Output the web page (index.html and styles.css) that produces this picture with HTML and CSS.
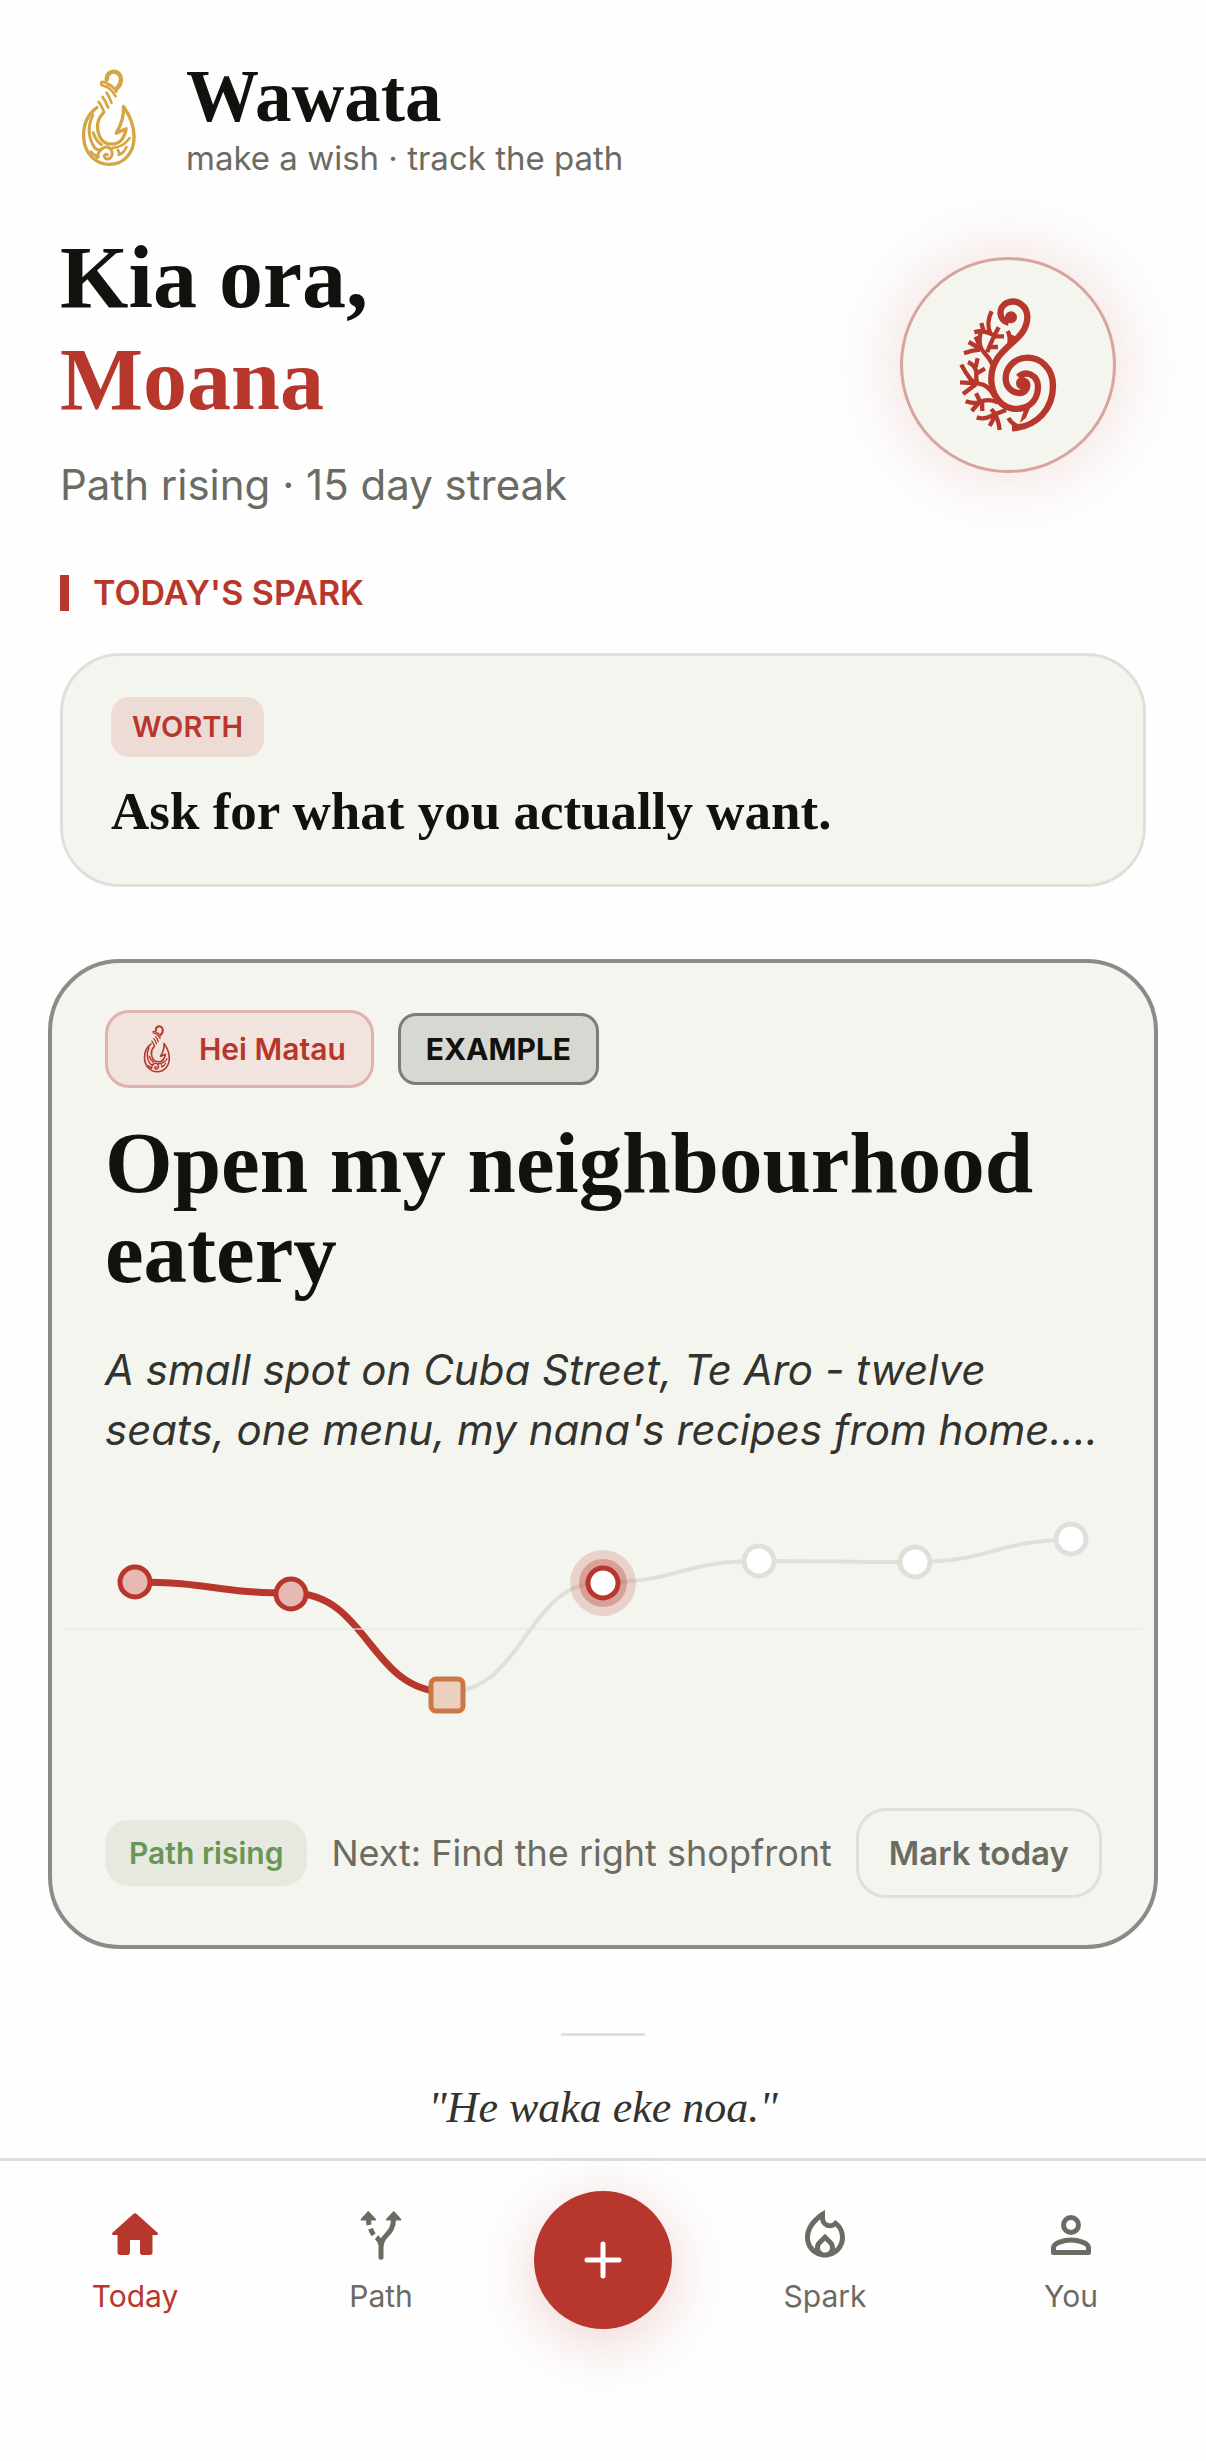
FILE: index.html
```html
<!DOCTYPE html>
<html lang="en">
<head>
    <meta charset="UTF-8">
    <meta name="viewport" content="width=device-width, initial-scale=1.0">
    <title>Wawata</title>
    <link rel="stylesheet" href="styles.css">
</head>
<body>
    <!-- Hook mark, used in the header and on the wish chip -->
    <svg class="sprite" aria-hidden="true">
        <symbol id="hook" viewBox="-33 30 295 295">
            <g fill="none" stroke="currentColor" stroke-width="10" stroke-linecap="round" stroke-linejoin="round">
                <path d="M78 146C50 166 37 200 38 235C41 288 78 317 115 317C162 317 191 280 190 232C189 195 176 168 158 143C160 172 151 198 136 223L166 210C161 238 148 256 124 256C96 257 82 236 80 205C79 186 86 174 97 163"/>
                <path d="M83 129Q91 138 100 160M95 114Q104 126 112 146M107 101Q116 112 122 132" stroke-width="8"/>
                <path d="M92 70Q88 80 100 81Q121 86 134 112" stroke-width="8"/>
                <path d="M92 70Q100 66 108 74Q126 80 137 98" stroke-width="8"/>
                <path d="M108 62C106 43 124 34 137 40C154 48 155 71 139 88" stroke-width="13"/>
                <path d="M66 168C50 202 52 238 72 268Q80 277 94 270M67 222Q76 248 92 258" stroke-width="9"/>
                <path d="M78 298C84 268 108 256 121 273C130 290 116 306 104 299C96 292 104 284 110 288" stroke-width="9"/>
                <path d="M60 279Q72 293 84 294M124 268Q158 266 176 238M141 274Q146 279 144 289Q160 282 167 265" stroke-width="8"/>
            </g>
        </symbol>
    </svg>

    <main class="page">
        <header class="brand">
            <svg class="brand-mark" aria-hidden="true"><use href="#hook"/></svg>
            <div>
                <div class="brand-name">Wawata</div>
                <div class="brand-tagline">make a wish · track the path</div>
            </div>
        </header>

        <section class="hero">
            <div>
                <h1 class="greeting">Kia ora,<br><span class="greeting-name">Moana</span></h1>
                <p class="streak">Path rising · 15 day streak</p>
            </div>
            <div class="avatar">
                <svg class="avatar-icon" viewBox="288 252 312 420" fill="none" stroke="#b8372c" stroke-width="19" stroke-linejoin="round" aria-hidden="true">
                    <!-- stem and koru spirals -->
                    <path d="M446 336C416 330 413 288 440 276C470 262 503 284 502 320C500 378 442 396 411 444C385 486 388 544 424 577C462 610 533 594 534 528C534 493 498 475 475 498"/>
                    <path d="M456 652C534 648 579 590 579 524C579 470 540 440 502 440C462 440 437 472 437 502C437 530 458 547 481 546C500 544 508 522 496 510"/>
                    <circle cx="453" cy="319" r="18" fill="#b8372c" stroke="none"/>
                    <circle cx="487" cy="517" r="19" fill="#b8372c" stroke="none"/>
                    <path d="M448 660L497 622L510 592L494 590L480 634Z" fill="#b8372c" stroke="none"/>
                    <!-- fronds -->
                    <g stroke-width="13">
                        <path d="M395 301C383 324 382 346 391 368M343 364Q366 356 391 368L408 376L432 376M364 336L371 361M416 349L402 376C394 394 386 408 382 424M385 408L414 408"/>
                        <path d="M443 360Q452 376 448 400M461 374L448 394"/>
                        <path d="M362 364C355 390 359 412 374 427Q388 440 399 464M326 393L358 411M312 427Q334 418 360 416M347 377L358 402"/>
                        <path d="M324 453Q344 462 349 482Q347 500 352 519M353 442L347 468M375 473L350 487"/>
                        <path d="M304 461Q314 482 332 505Q348 518 370 521Q390 530 404 558M300 514L350 517M309 549L348 520"/>
                        <path d="M317 571Q337 579 358 574Q386 560 414 575M348 547L361 573M335 600L356 576M366 572L367 600"/>
                        <path d="M350 619Q374 627 397 613L438 597M394 594L408 612M389 645Q399 628 406 610M404 608Q416 628 419 657M445 621Q456 641 482 650"/>
                    </g>
                </svg>
            </div>
        </section>

        <h2 class="section-label">TODAY'S SPARK</h2>
        <section class="spark-card">
            <span class="tag">WORTH</span>
            <p class="spark-text">Ask for what you actually want.</p>
        </section>

        <article class="wish-card">
            <div class="chips">
                <span class="chip chip-type"><svg class="chip-icon" aria-hidden="true"><use href="#hook"/></svg>Hei Matau</span>
                <span class="chip chip-example">EXAMPLE</span>
            </div>
            <h2 class="wish-title">Open my neighbourhood eatery</h2>
            <p class="wish-note">A small spot on Cuba Street, Te Aro - twelve seats, one menu, my nana's recipes from home....</p>

            <svg class="chart" viewBox="0 0 1080 270" fill="none" role="img" aria-label="Wish path">
                <path d="M384 190C462 190 462 80 540 80C618 80 618 59 696 59C774 59 774 60 852 60C930 60 930 38 1008 38" stroke="#dfe0da" stroke-width="4"/>
                <path d="M72 80C150 80 150 91 228 91C306 91 306 190 384 190" stroke="#b8372c" stroke-width="7"/>
                <path d="M1 127H1079" stroke="#e6e7e1" stroke-width="2" opacity=".6"/>
                <circle cx="540" cy="81" r="33" fill="#b8372c" opacity=".18"/>
                <circle cx="540" cy="81" r="24" fill="#b8372c" opacity=".32"/>
                <g stroke="#b8372c" stroke-width="5">
                    <circle cx="72" cy="80" r="15" fill="#e8b9b4"/>
                    <circle cx="228" cy="92" r="15" fill="#e8b9b4"/>
                    <circle cx="540" cy="81" r="15" fill="#fff"/>
                </g>
                <rect x="368" y="177" width="32" height="32" rx="5" fill="#eccfbf" stroke="#cc7844" stroke-width="5"/>
                <g fill="#fff" stroke="#dfe0da" stroke-width="5">
                    <circle cx="696" cy="59" r="15"/>
                    <circle cx="852" cy="60" r="15"/>
                    <circle cx="1008" cy="37" r="15"/>
                </g>
            </svg>

            <footer class="wish-footer">
                <span class="status">Path rising</span>
                <span class="next">Next: Find the right shopfront</span>
                <button class="mark-button" type="button">Mark today</button>
            </footer>
        </article>

        <div class="divider"></div>
        <p class="quote">"He waka eke noa."</p>
    </main>

    <nav class="tabbar">
        <a class="tab active" href="#today">
            <svg class="tab-icon" viewBox="0 0 24 24" fill="currentColor" aria-hidden="true"><path d="M10 19v-5h4v5c0 .55.45 1 1 1h3c.55 0 1-.45 1-1v-7h1.7c.46 0 .68-.57.33-.87L12.67 3.6c-.38-.34-.96-.34-1.34 0l-8.36 7.53c-.34.3-.13.87.33.87H5v7c0 .55.45 1 1 1h3c.55 0 1-.45 1-1z"/></svg>
            Today
        </a>
        <a class="tab" href="#path">
            <svg class="tab-icon" viewBox="0 0 24 24" fill="none" stroke="currentColor" stroke-width="2" aria-hidden="true">
                <path d="M6.9 2.8L4.2 5.8H9.7ZM17.1 2.8L14.3 5.8H19.8Z" fill="currentColor" stroke-width=".7" stroke-linejoin="round"/>
                <path d="M7 5.5Q7 6.7 7.2 8M7.8 9.5Q8.3 10.9 9.1 11.9M10.2 12.9Q11.8 14.2 12 16"/>
                <path d="M17 5.5C17 12.2 12 11.6 12 17V20.9" stroke-linecap="round"/>
            </svg>
            Path
        </a>
        <div class="tab-add">
            <button class="add-button" type="button" aria-label="Add a wish">
                <svg class="add-icon" viewBox="0 0 38 38" stroke="#fff" stroke-width="5" stroke-linecap="round" aria-hidden="true"><path d="M19 3V35M3 19H35"/></svg>
            </button>
        </div>
        <a class="tab" href="#spark">
            <svg class="tab-icon" viewBox="0 0 24 24" fill="currentColor" aria-hidden="true"><path d="M16 6l-.44.55c-.42.52-.98.75-1.54.75C13 7.3 12 6.52 12 5.3V2S4 6 4 13c0 4.42 3.58 8 8 8s8-3.58 8-8c0-2.96-1.61-5.62-4-7zm-4 13c-1.1 0-2-.87-2-1.94 0-.51.2-.99.58-1.36L12 14.3l1.43 1.4c.37.37.57.85.57 1.36 0 1.07-.9 1.94-2 1.94zm3.96-1.5c.04-.36.22-1.89-1.13-3.22L12 11.5l-2.83 2.78C7.81 15.62 8 17.16 8.04 17.5A5.98 5.98 0 0 1 6 13c0-3.16 2.13-5.65 4.03-7.25a3.993 3.993 0 0 0 3.99 3.55c.78 0 1.54-.23 2.18-.66A5.9 5.9 0 0 1 18 13c0 1.79-.79 3.4-2.04 4.5z"/></svg>
            Spark
        </a>
        <a class="tab" href="#you">
            <svg class="tab-icon" viewBox="0 0 24 24" fill="none" stroke="currentColor" stroke-width="2" stroke-linejoin="round" aria-hidden="true">
                <circle cx="12" cy="8" r="3"/>
                <path d="M5 17C5 15.2 9.2 14 12 14S19 15.2 19 17V19H5Z"/>
            </svg>
            You
        </a>
    </nav>
</body>
</html>
```
FILE: styles.css
```css
:root {
    --red: #b8372c;
    --ink: #11120e;
    --muted: #6b6b62;
    --surface: #f5f5ef;
    --line: #dfe0da;
    --serif: "Liberation Serif", serif;
    --sans: Inter, sans-serif;
}

* {
    box-sizing: border-box;
}

body {
    margin: 0;
    min-height: 100vh;
    display: flex;
    flex-direction: column;
    background: #fefefe;
    color: var(--ink);
    font-family: var(--sans);
}

h1, h2, p {
    margin: 0;
}

.sprite {
    display: none;
}

.page {
    flex: 1;
    padding: 57px 60px 18px;
}

/* Header */
.brand {
    display: flex;
    align-items: center;
    gap: 30px;
}

.brand-mark {
    width: 98px;
    height: 98px;
    margin-right: -2px;
    color: #d4a542;
}

.brand-name {
    font: bold 73px/80px var(--serif);
}

.brand-tagline {
    font-size: 33px;
    line-height: 42px;
    color: var(--muted);
}

.hero {
    display: flex;
    align-items: flex-start;
    justify-content: space-between;
    margin-top: 48px;
}

.greeting {
    font: bold 88px/102px var(--serif);
}

.greeting-name {
    color: var(--red);
}

.streak {
    margin-top: 24px;
    font-size: 42px;
    line-height: 60px;
    color: var(--muted);
}

.avatar {
    display: flex;
    align-items: center;
    justify-content: center;
    width: 216px;
    height: 216px;
    margin: 30px 30px 0 0;
    border: 3px solid #d9a49e;
    border-radius: 50%;
    background: var(--surface);
    box-shadow: 0 0 72px rgba(184, 55, 44, 0.18);
}

.avatar-icon {
    width: 104px;
    height: 140px;
}

/* Today's spark */
.section-label {
    display: flex;
    align-items: center;
    gap: 24px;
    margin-top: 57px;
    font-size: 34px;
    font-weight: 600;
    line-height: 42px;
    color: var(--red);
}

.section-label::before {
    content: '';
    width: 9px;
    height: 36px;
    background: var(--red);
}

.spark-card {
    margin-top: 39px;
    padding: 41px 48px;
    border: 3px solid var(--line);
    border-radius: 60px;
    background: var(--surface);
}

.tag {
    display: block;
    width: fit-content;
    padding: 12px 21px;
    border-radius: 18px;
    background: #eddcd6;
    color: var(--red);
    font-size: 29px;
    font-weight: 600;
    line-height: 36px;
}

.spark-text {
    margin-top: 22px;
    font: bold 53px/64px var(--serif);
}

/* Wish card */
.wish-card {
    margin: 72px -12px 0;
    padding: 47px 53px;
    border: 4px solid #8b8c87;
    border-radius: 72px;
    background: var(--surface);
}

.chips {
    display: flex;
    align-items: center;
    gap: 24px;
}

.chip {
    display: flex;
    align-items: center;
    border: 3px solid;
    font-size: 30px;
    line-height: 36px;
}

.chip-type {
    gap: 18px;
    padding: 12px 25px;
    border-color: #e2b1ac;
    border-radius: 24px;
    background: #f1e3de;
    color: var(--red);
    font-weight: 600;
}

.chip-icon {
    width: 48px;
    height: 48px;
}

.chip-example {
    padding: 15px 25px;
    border-color: #7c7d79;
    border-radius: 18px;
    background: #d7d8d2;
    font-weight: 700;
}

.wish-title {
    margin-top: 30px;
    font: bold 87px/90px var(--serif);
}

.wish-note {
    margin-top: 42px;
    color: #32332f;
    font-size: 42px;
    font-style: italic;
    line-height: 60px;
}

.chart {
    display: block;
    width: calc(100% + 84px);
    margin: 42px -42px 36px;
}

.wish-footer {
    display: flex;
    align-items: center;
    gap: 24px;
}

.status {
    padding: 15px 24px;
    border-radius: 24px;
    background: #e6e9df;
    color: #6a9655;
    font-size: 30px;
    font-weight: 600;
    line-height: 36px;
    white-space: nowrap;
}

.next {
    flex: 1;
    color: var(--muted);
    font-size: 36px;
    line-height: 48px;
    white-space: nowrap;
}

.mark-button {
    padding: 21px 30px;
    border: 3px solid var(--line);
    border-radius: 30px;
    background: none;
    color: var(--muted);
    font: 600 33px/42px var(--sans);
    white-space: nowrap;
}

.divider {
    width: 84px;
    height: 3px;
    margin: 84px auto 42px;
    background: var(--line);
}

.quote {
    color: #32332f;
    font: italic 44px/60px var(--serif);
    text-align: center;
}

/* Bottom navigation */
.tabbar {
    display: flex;
    padding: 30px 12px 132px;
    border-top: 3px solid var(--line);
}

.tab {
    flex: 1;
    display: flex;
    flex-direction: column;
    align-items: center;
    gap: 10px;
    padding-top: 14px;
    color: var(--muted);
    font-size: 30px;
    line-height: 42px;
    text-decoration: none;
}

.tab.active {
    color: var(--red);
}

.tab-icon {
    width: 60px;
    height: 60px;
}

.tab-add {
    width: 198px;
    display: flex;
    justify-content: center;
}

.add-button {
    display: flex;
    align-items: center;
    justify-content: center;
    width: 138px;
    height: 138px;
    padding: 0;
    border: none;
    border-radius: 50%;
    background: var(--red);
    box-shadow: 0 12px 60px rgba(184, 55, 44, 0.22);
}

.add-icon {
    width: 38px;
    height: 38px;
}
```
